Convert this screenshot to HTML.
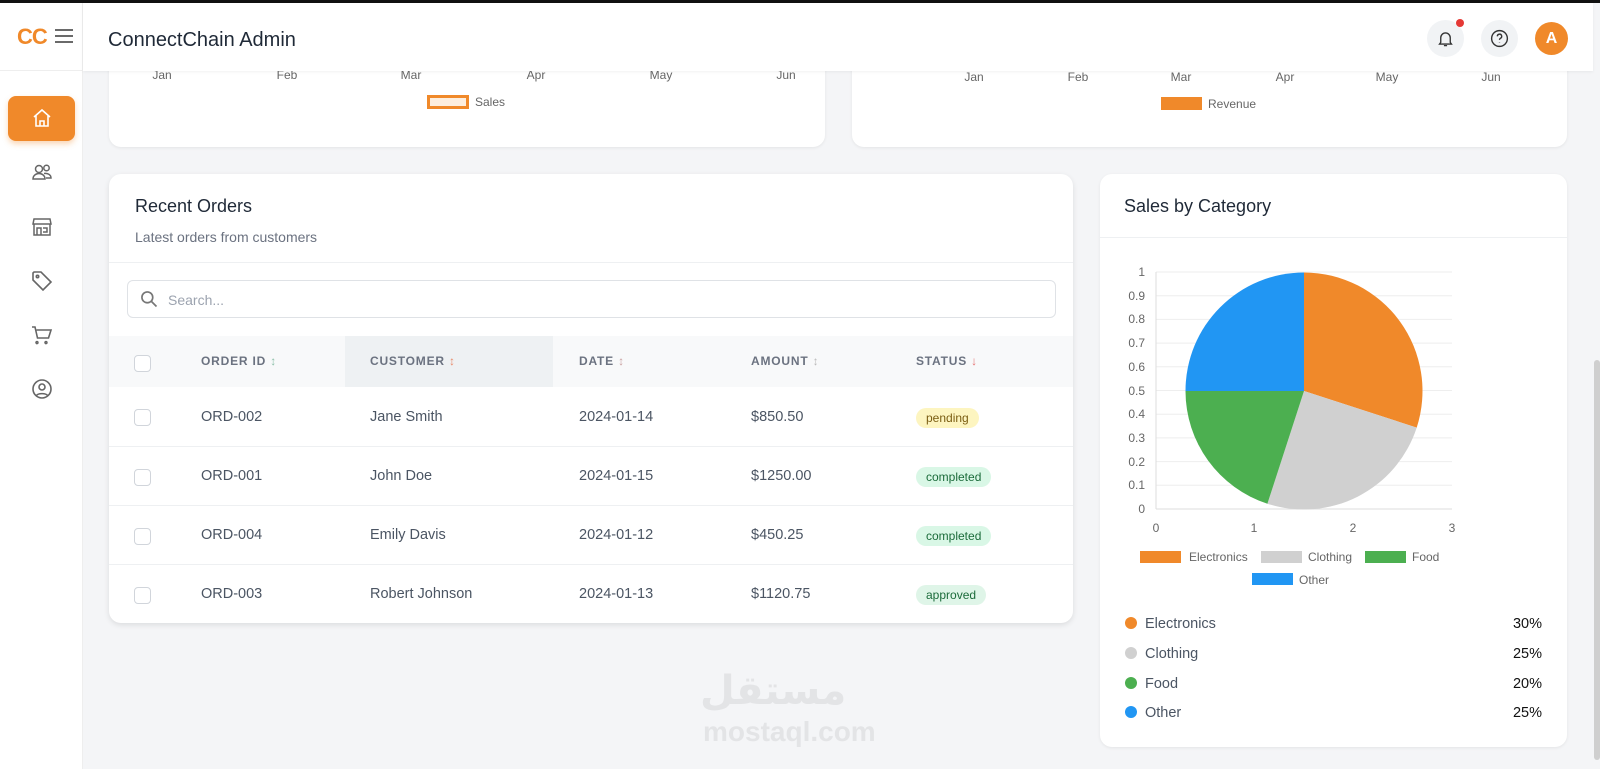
<!DOCTYPE html>
<html><head><meta charset="utf-8"><style>
*{box-sizing:border-box;margin:0;padding:0}
body{width:1600px;height:769px;overflow:hidden;background:#f4f5f7;font-family:"Liberation Sans","DejaVu Sans",sans-serif;position:relative;color:#374151}
.a{position:absolute}
.card{position:absolute;background:#fff;border-radius:12px;box-shadow:0 1px 3px rgba(0,0,0,.07)}
.t{position:absolute;white-space:nowrap}
.lbl{position:absolute;font-size:12px;color:#666;transform:translateX(-50%)}
.th{position:absolute;font-size:12px;font-weight:bold;letter-spacing:.8px;color:#6b7280;top:354px}
.cb{position:absolute;width:17px;height:17px;border:1px solid #d1d5db;border-radius:4px;background:#fff;left:134px}
.cell{position:absolute;font-size:14.5px;color:#4b5563}
.badge{position:absolute;left:916px;font-size:12px;padding:3px 10px;border-radius:10px}
.hr{position:absolute;left:109px;width:964px;height:1px;background:#eef0f2}
.ic{position:absolute;left:30px;width:24px;height:24px}
</style></head><body>
<div class="a" style="left:0;top:0;width:1600px;height:3px;background:#111"></div>
<!-- sidebar -->
<div class="a" style="left:0;top:3px;width:83px;height:766px;background:#fff;border-right:1px solid #eee"></div>
<div class="a" style="left:0;top:70px;width:83px;height:1px;background:#eee"></div>
<div class="t" style="left:17px;top:24px;font-size:22px;font-weight:bold;color:#f0892a;letter-spacing:-1px">CC</div>
<svg class="a" style="left:54px;top:28px" width="20" height="16" viewBox="0 0 20 16"><path d="M1 2h18M1 8h18M1 14h18" stroke="#555" stroke-width="1.8"/></svg>
<div class="a" style="left:8px;top:96px;width:67px;height:45px;background:#f0892a;border-radius:8px;box-shadow:0 3px 6px rgba(240,137,42,.35)"></div>
<svg class="ic" style="top:106px" viewBox="0 0 24 24" fill="none" stroke="#fff" stroke-width="1.6"><path d="M4 11 12 4l8 7M6 9.5V20h12V9.5M10 20v-5h4v5"/></svg>
<svg class="ic" style="top:160px" viewBox="0 0 24 24" fill="none" stroke="#666" stroke-width="1.5"><circle cx="9" cy="9" r="3.5"/><circle cx="16.5" cy="8" r="2.7"/><path d="M3 19c0-3.5 3-5.5 6-5.5s6 2 6 5.5zM14 13.5c3.5-.5 7 1 7 4.5h-5"/></svg>
<svg class="ic" style="top:215px" viewBox="0 0 24 24" fill="none" stroke="#666" stroke-width="1.5"><path d="M4 4h16l1 5H3zM4 9v11h16V9M7 20v-7h4v7M13 13h4v4h-4"/></svg>
<svg class="ic" style="top:269px" viewBox="0 0 24 24" fill="none" stroke="#666" stroke-width="1.6"><path d="M3 4v7l10 10 8-8L11 3H4z"/><circle cx="7.5" cy="7.5" r="1.2"/></svg>
<svg class="ic" style="top:323px" viewBox="0 0 24 24" fill="none" stroke="#666" stroke-width="1.6"><path d="M2 4h3l2.5 11h11L21 7H6.5M8 19.5a1 1 0 1 0 0 .1M17 19.5a1 1 0 1 0 0 .1"/></svg>
<svg class="ic" style="top:377px" viewBox="0 0 24 24" fill="none" stroke="#666" stroke-width="1.6"><circle cx="12" cy="12" r="9"/><circle cx="12" cy="10" r="3"/><path d="M6.5 18.5c1.5-2.5 9.5-2.5 11 0"/></svg>
<!-- top chart cards -->
<div class="card" style="left:109px;top:40px;width:716px;height:107px"></div>
<div class="card" style="left:852px;top:40px;width:715px;height:107px"></div>
<div class="lbl" style="left:162px;top:68px">Jan</div><div class="lbl" style="left:287px;top:68px">Feb</div><div class="lbl" style="left:411px;top:68px">Mar</div><div class="lbl" style="left:536px;top:68px">Apr</div><div class="lbl" style="left:661px;top:68px">May</div><div class="lbl" style="left:786px;top:68px">Jun</div>
<div class="a" style="left:427px;top:95px;width:42px;height:14px;border:3px solid #f0892a;background:#fdeede"></div>
<div class="t" style="left:475px;top:95px;font-size:12px;color:#666">Sales</div>
<div class="lbl" style="left:974px;top:70px">Jan</div><div class="lbl" style="left:1078px;top:70px">Feb</div><div class="lbl" style="left:1181px;top:70px">Mar</div><div class="lbl" style="left:1285px;top:70px">Apr</div><div class="lbl" style="left:1387px;top:70px">May</div><div class="lbl" style="left:1491px;top:70px">Jun</div>
<div class="a" style="left:1161px;top:97px;width:41px;height:13px;background:#f0892a"></div>
<div class="t" style="left:1208px;top:97px;font-size:12px;color:#666">Revenue</div>
<!-- header -->
<div class="a" style="left:83px;top:3px;width:1510px;height:68px;background:#fff;box-shadow:0 1px 3px rgba(0,0,0,.06)"></div>
<div class="t" style="left:108px;top:29px;font-size:20px;color:#1f2937">ConnectChain Admin</div>
<div class="a" style="left:1427px;top:20px;width:37px;height:37px;border-radius:50%;background:#f1f3f5"></div>
<svg class="a" style="left:1436px;top:29px" width="19" height="19" viewBox="0 0 24 24" fill="none" stroke="#333" stroke-width="1.7"><path d="M6 17V11a6 6 0 0 1 12 0v6l1.5 2h-15zM10 21h4"/></svg>
<div class="a" style="left:1456px;top:19px;width:8px;height:8px;border-radius:50%;background:#e53935"></div>
<div class="a" style="left:1481px;top:20px;width:37px;height:37px;border-radius:50%;background:#f1f3f5"></div>
<svg class="a" style="left:1489px;top:28px" width="21" height="21" viewBox="0 0 24 24" fill="none" stroke="#333" stroke-width="1.6"><circle cx="12" cy="12" r="9"/><path d="M9.5 9.5a2.5 2.5 0 1 1 3.5 2.3c-.7.4-1 .9-1 1.7M12 16.5v.5"/></svg>
<div class="a" style="left:1535px;top:22px;width:33px;height:33px;border-radius:50%;background:#f0892a;color:#fff;font-weight:bold;font-size:16px;text-align:center;line-height:33px">A</div>
<!-- scrollbar -->
<div class="a" style="left:1594px;top:360px;width:6px;height:400px;background:#cfcfcf;border-radius:3px"></div>
<!-- recent orders -->
<div class="card" style="left:109px;top:174px;width:964px;height:449px;box-shadow:0 2px 6px rgba(0,0,0,.1)"></div>
<div class="t" style="left:135px;top:196px;font-size:18px;color:#1f2937">Recent Orders</div>
<div class="t" style="left:135px;top:229px;font-size:14px;color:#6b7280">Latest orders from customers</div>
<div class="hr" style="top:262px"></div>
<div class="a" style="left:127px;top:280px;width:929px;height:38px;border:1px solid #dfe2e6;border-radius:6px"></div>
<svg class="a" style="left:139px;top:289px" width="20" height="20" viewBox="0 0 24 24" fill="none" stroke="#777" stroke-width="2"><circle cx="10" cy="10" r="6.5"/><path d="M15 15l6 6"/></svg>
<div class="t" style="left:168px;top:292px;font-size:14px;color:#9ca3af">Search...</div>
<div class="a" style="left:109px;top:336px;width:964px;height:51px;background:#f8f9fa"></div>
<div class="a" style="left:345px;top:336px;width:208px;height:51px;background:#eef1f3"></div>
<div class="cb" style="top:355px"></div>
<div class="th" style="left:201px">ORDER ID <span style="color:#8bbfa8">↕</span></div>
<div class="th" style="left:370px">CUSTOMER <span style="color:#e88a6a">↕</span></div>
<div class="th" style="left:579px">DATE <span style="color:#c9a0a0">↕</span></div>
<div class="th" style="left:751px">AMOUNT <span style="color:#bbb">↕</span></div>
<div class="th" style="left:916px">STATUS <span style="color:#e57373">↓</span></div>
<div class="hr" style="top:446px"></div><div class="hr" style="top:505px"></div><div class="hr" style="top:564px"></div>
<div class="cb" style="top:409px"></div><div class="cell" style="left:201px;top:409px">ORD-002</div><div class="cell" style="left:370px;top:409px">Jane Smith</div><div class="cell" style="left:579px;top:409px">2024-01-14</div><div class="cell" style="left:751px;top:409px">$850.50</div><div class="badge" style="top:408px;background:#fdf5c0;color:#7a5d12">pending</div>
<div class="cb" style="top:469px"></div><div class="cell" style="left:201px;top:468px">ORD-001</div><div class="cell" style="left:370px;top:468px">John Doe</div><div class="cell" style="left:579px;top:468px">2024-01-15</div><div class="cell" style="left:751px;top:468px">$1250.00</div><div class="badge" style="top:467px;background:#d9f7e6;color:#1b6b3a">completed</div>
<div class="cb" style="top:528px"></div><div class="cell" style="left:201px;top:527px">ORD-004</div><div class="cell" style="left:370px;top:527px">Emily Davis</div><div class="cell" style="left:579px;top:527px">2024-01-12</div><div class="cell" style="left:751px;top:527px">$450.25</div><div class="badge" style="top:526px;background:#d9f7e6;color:#1b6b3a">completed</div>
<div class="cb" style="top:587px"></div><div class="cell" style="left:201px;top:586px">ORD-003</div><div class="cell" style="left:370px;top:586px">Robert Johnson</div><div class="cell" style="left:579px;top:586px">2024-01-13</div><div class="cell" style="left:751px;top:586px">$1120.75</div><div class="badge" style="top:585px;background:#dff5e8;color:#1b6b3a">approved</div>
<!-- sales by category -->
<div class="card" style="left:1100px;top:174px;width:467px;height:573px"></div>
<div class="t" style="left:1124px;top:196px;font-size:18px;color:#1f2937">Sales by Category</div>
<div class="a" style="left:1100px;top:237px;width:467px;height:1px;background:#eef0f2"></div>
<svg class="a" style="left:1100px;top:260px" width="467" height="340" viewBox="1100 260 467 340" font-family="Liberation Sans, sans-serif" font-size="12" fill="#666">
<g stroke="#eee" stroke-width="1">
<line x1="1156" y1="272" x2="1452" y2="272"/><line x1="1156" y1="295.7" x2="1452" y2="295.7"/><line x1="1156" y1="319.4" x2="1452" y2="319.4"/><line x1="1156" y1="343.1" x2="1452" y2="343.1"/><line x1="1156" y1="366.8" x2="1452" y2="366.8"/><line x1="1156" y1="390.5" x2="1452" y2="390.5"/><line x1="1156" y1="414.2" x2="1452" y2="414.2"/><line x1="1156" y1="437.9" x2="1452" y2="437.9"/><line x1="1156" y1="461.6" x2="1452" y2="461.6"/><line x1="1156" y1="485.3" x2="1452" y2="485.3"/>
</g>
<line x1="1156" y1="272" x2="1156" y2="509" stroke="#ddd"/><line x1="1156" y1="509" x2="1452" y2="509" stroke="#ddd"/>
<g text-anchor="end"><text x="1145" y="276">1</text><text x="1145" y="300">0.9</text><text x="1145" y="323">0.8</text><text x="1145" y="347">0.7</text><text x="1145" y="371">0.6</text><text x="1145" y="395">0.5</text><text x="1145" y="418">0.4</text><text x="1145" y="442">0.3</text><text x="1145" y="466">0.2</text><text x="1145" y="489">0.1</text><text x="1145" y="513">0</text></g>
<g text-anchor="middle"><text x="1156" y="532">0</text><text x="1254" y="532">1</text><text x="1353" y="532">2</text><text x="1452" y="532">3</text></g>
<path d="M1304 391V272.5A118.5 118.5 0 0 1 1416.7 427.6Z" fill="#f0892a"/>
<path d="M1304 391L1416.7 427.6A118.5 118.5 0 0 1 1267.4 503.7Z" fill="#d0d0d0"/>
<path d="M1304 391L1267.4 503.7A118.5 118.5 0 0 1 1185.5 391Z" fill="#4caf50"/>
<path d="M1304 391H1185.5A118.5 118.5 0 0 1 1304 272.5Z" fill="#2196f3"/>
<rect x="1140" y="551" width="41" height="12" fill="#f0892a"/><text x="1189" y="561">Electronics</text>
<rect x="1261" y="551" width="41" height="12" fill="#d0d0d0"/><text x="1308" y="561">Clothing</text>
<rect x="1365" y="551" width="41" height="12" fill="#4caf50"/><text x="1412" y="561">Food</text>
<rect x="1252" y="573" width="41" height="12" fill="#2196f3"/><text x="1299" y="584">Other</text>
</svg>
<div class="a" style="left:1125px;top:617px;width:12px;height:12px;border-radius:50%;background:#f0892a"></div><div class="t" style="left:1145px;top:616px;font-size:14.5px;color:#4b5563">Electronics</div><div class="t" style="right:58px;top:616px;font-size:14.5px;color:#111">30%</div>
<div class="a" style="left:1125px;top:647px;width:12px;height:12px;border-radius:50%;background:#d0d0d0"></div><div class="t" style="left:1145px;top:646px;font-size:14.5px;color:#4b5563">Clothing</div><div class="t" style="right:58px;top:646px;font-size:14.5px;color:#111">25%</div>
<div class="a" style="left:1125px;top:677px;width:12px;height:12px;border-radius:50%;background:#4caf50"></div><div class="t" style="left:1145px;top:676px;font-size:14.5px;color:#4b5563">Food</div><div class="t" style="right:58px;top:676px;font-size:14.5px;color:#111">20%</div>
<div class="a" style="left:1125px;top:706px;width:12px;height:12px;border-radius:50%;background:#2196f3"></div><div class="t" style="left:1145px;top:705px;font-size:14.5px;color:#4b5563">Other</div><div class="t" style="right:58px;top:705px;font-size:14.5px;color:#111">25%</div>
<!-- watermark -->
<div class="t" style="left:700px;top:668px;font-size:40px;font-weight:bold;color:#e3e4e6;font-family:'DejaVu Sans',sans-serif">مستقل</div>
<div class="t" style="left:703px;top:716px;font-size:28px;font-weight:bold;color:#e3e4e6">mostaql.com</div>
</body></html>
